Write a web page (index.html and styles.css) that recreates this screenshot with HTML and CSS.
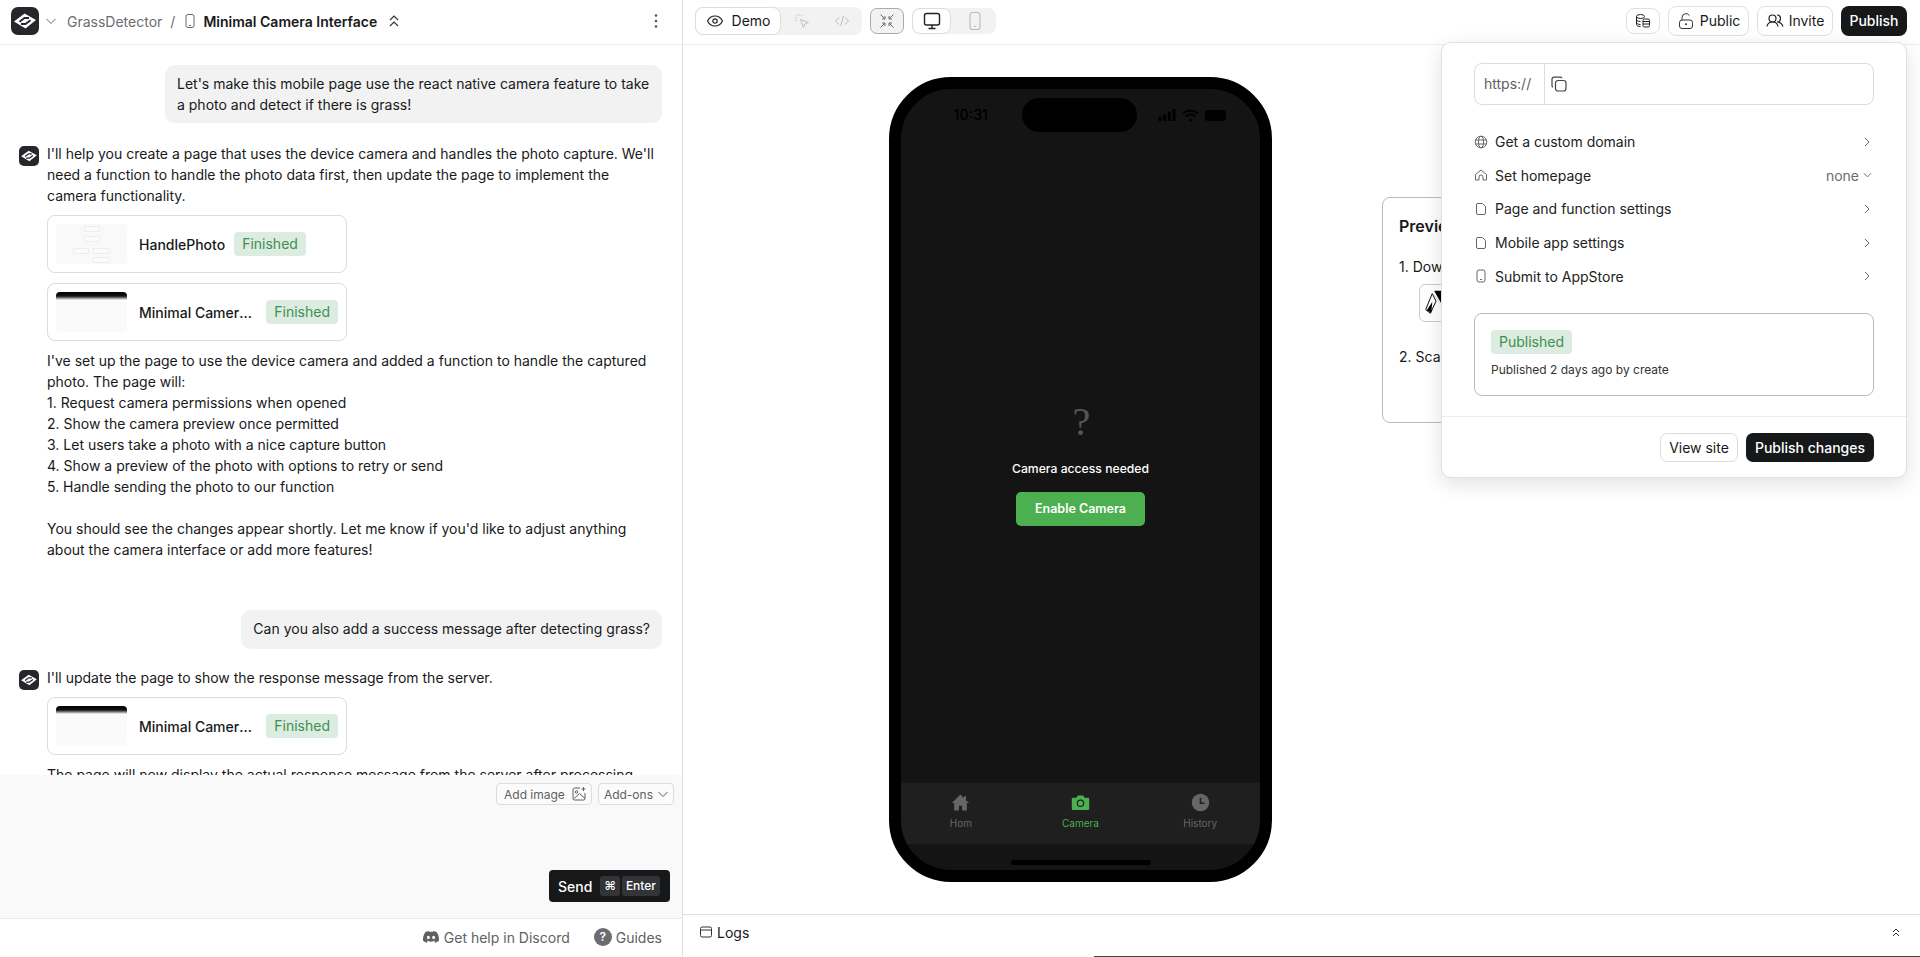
FILE: index.html
```html
<!DOCTYPE html>
<html lang="en">
<head>
<meta charset="utf-8">
<title>Minimal Camera Interface</title>
<link rel="stylesheet" href="styles.css">
</head>
<body>
<div class="app">
  <aside class="left">
    <header class="left-top">
      <svg class="logo" viewBox="0 0 28 28"><rect width="28" height="28" rx="7" fill="#26272b"/><path d="M3 14.500 13.500 6.500 25 13 14.500 21.500Z" fill="#fff"/><path d="M8.500 14.800 13.500 11H18M19.500 13.200 14.500 17H10" fill="none" stroke="#26272b" stroke-width="1.800"/></svg>
      <svg class="ic12 muted" viewBox="0 0 12 12"><path d="M1.500 4 6 8.500 10.500 4" fill="none" stroke="currentColor"/></svg>
      <span class="crumb">GrassDetector</span>
      <span class="crumb slash">/</span>
      <svg class="ic16 muted" viewBox="0 0 16 16"><rect x="4" y="1.500" width="8" height="13" rx="2" fill="none" stroke="currentColor"/><path d="M7 12.500h2" stroke="currentColor"/></svg>
      <span class="crumb-title">Minimal Camera Interface</span>
      <svg class="ic14" viewBox="0 0 14 14"><path d="M3 6 7 2l4 4M3 12l4-4 4 4" fill="none" stroke="#333" stroke-width="1.200"/></svg>
      <svg class="kebab" viewBox="0 0 4 16"><circle cx="2" cy="2.500" r="1.300"/><circle cx="2" cy="8" r="1.300"/><circle cx="2" cy="13.500" r="1.300"/></svg>
    </header>

    <div class="chat">
      <div class="user-msg first">Let's make this mobile page use the react native camera feature to take a photo and detect if there is grass!</div>

      <div class="bot-msg">
        <svg class="logo-sm" viewBox="0 0 28 28"><rect width="28" height="28" rx="7" fill="#26272b"/><path d="M3 14.500 13.500 6.500 25 13 14.500 21.500Z" fill="#fff"/><path d="M8.500 14.800 13.500 11H18M19.500 13.200 14.500 17H10" fill="none" stroke="#26272b" stroke-width="1.800"/></svg>
        <div class="bot-body">
          <p class="para">I'll help you create a page that uses the device camera and handles the photo capture. We'll need a function to handle the photo data first, then update the page to implement the camera functionality.</p>
          <div class="card">
            <div class="thumb thumb-fn"><i></i><i></i><i></i><i></i><i></i></div>
            <span class="card-name fit">HandlePhoto</span>
            <span class="badge">Finished</span>
          </div>
          <div class="card">
            <div class="thumb thumb-page"></div>
            <span class="card-name">Minimal Camera Interface</span>
            <span class="badge">Finished</span>
          </div>
          <p class="para after">I've set up the page to use the device camera and added a function to handle the captured photo. The page will:<br>1. Request camera permissions when opened<br>2. Show the camera preview once permitted<br>3. Let users take a photo with a nice capture button<br>4. Show a preview of the photo with options to retry or send<br>5. Handle sending the photo to our function<br><br>You should see the changes appear shortly. Let me know if you'd like to adjust anything about the camera interface or add more features!</p>
        </div>
      </div>

      <div class="user-msg second">Can you also add a success message after detecting grass?</div>

      <div class="bot-msg third">
        <svg class="logo-sm" viewBox="0 0 28 28"><rect width="28" height="28" rx="7" fill="#26272b"/><path d="M3 14.500 13.500 6.500 25 13 14.500 21.500Z" fill="#fff"/><path d="M8.500 14.800 13.500 11H18M19.500 13.200 14.500 17H10" fill="none" stroke="#26272b" stroke-width="1.800"/></svg>
        <div class="bot-body">
          <p class="para">I'll update the page to show the response message from the server.</p>
          <div class="card">
            <div class="thumb thumb-page"></div>
            <span class="card-name">Minimal Camera Interface</span>
            <span class="badge">Finished</span>
          </div>
          <p class="para after">The page will now display the actual response message from the server after processing</p>
        </div>
      </div>
    </div>

    <div class="composer">
      <div class="composer-tools">
        <button class="tool">Add image
          <svg class="ic16" viewBox="0 0 16 16" fill="none" stroke="currentColor"><path d="M9 2H3.500A1.500 1.500 0 0 0 2 3.500v9A1.500 1.500 0 0 0 3.500 14h9a1.500 1.500 0 0 0 1.500-1.500V7"/><circle cx="5.500" cy="6" r="1.200"/><path d="m2.500 13 6-5.500 5.500 5M12.500 1v4M10.500 3h4"/></svg>
        </button>
        <button class="tool tool-addons">Add-ons
          <svg class="ic12" viewBox="0 0 12 12"><path d="M1.500 4 6 8.500 10.500 4" fill="none" stroke="currentColor"/></svg>
        </button>
      </div>
      <div class="composer-send">
        <button class="send">Send <kbd class="key key-cmd">⌘</kbd><kbd class="key">Enter</kbd></button>
      </div>
    </div>

    <footer class="left-foot">
      <a class="foot-link">
        <svg class="ic18" viewBox="0 0 24 24"><path fill="#5f6064" d="M19.500 5.300A17 17 0 0 0 15.300 4l-.5 1.100a16 16 0 0 0-5.600 0L8.700 4a17 17 0 0 0-4.200 1.300C1.800 9.300 1.100 13.200 1.400 17a17 17 0 0 0 5.200 2.700l1.100-1.800-1.700-.8.400-.3a12 12 0 0 0 11.200 0l.4.300-1.700.8 1.100 1.800a17 17 0 0 0 5.200-2.700c.4-4.400-.7-8.300-3.100-11.700ZM8.500 14.700c-1 0-1.900-1-1.900-2.200s.8-2.200 1.900-2.200 1.900 1 1.900 2.200-.8 2.200-1.900 2.200Zm7 0c-1 0-1.900-1-1.900-2.200s.8-2.200 1.900-2.200 1.900 1 1.900 2.200-.8 2.200-1.900 2.200Z"/></svg>
        Get help in Discord
      </a>
      <a class="foot-link">
        <span class="help-dot">?</span>
        Guides
      </a>
    </footer>
  </aside>

  <main class="right">
    <header class="right-top">
      <div class="seg seg-mode">
        <button class="seg-on seg-demo">
          <svg class="ic18" viewBox="0 0 18 18" fill="none" stroke="#222" stroke-width="1.200"><path d="M1.500 9S4 4 9 4s7.500 5 7.500 5-2.500 5-7.500 5-7.500-5-7.500-5Z"/><circle cx="9" cy="9" r="2.200"/></svg>
          Demo
        </button>
        <svg class="ic16 seg-ic ic-a" viewBox="0 0 16 16" fill="none" stroke="#bdbdbd"><path d="m6.500 6.500 8 3-3.500 1.500-1.500 3.500Z"/><path d="M5 1v2M1 5h2M2 2l1.500 1.500M8 2 6.800 3.200M2 8l1.200-1.200" stroke-dasharray="1.500 1"/></svg>
        <svg class="ic16 seg-ic ic-b" viewBox="0 0 16 16" fill="none" stroke="#bdbdbd"><path d="M5 4.500 1.500 8 5 11.500M11 4.500 14.500 8 11 11.500M9.500 3l-3 10"/></svg>
      </div>
      <button class="collapse">
        <svg class="ic16" viewBox="0 0 16 16" fill="none" stroke="#666"><path d="M1.500 1.500l4 4M6 3v3H3M14.500 1.500l-4 4M10 3v3h3M1.500 14.500l4-4M6 13v-3H3M14.500 14.500l-4-4M10 13v-3h3"/></svg>
      </button>
      <div class="seg seg-device">
        <button class="seg-on seg-desk">
          <svg class="ic20" viewBox="0 0 20 20" fill="none" stroke="#222" stroke-width="1.400"><rect x="2.500" y="2.500" width="15" height="11.500" rx="2"/><path d="M10 14v3M6.500 17.500h7"/></svg>
        </button>
        <svg class="ic20 seg-phone" viewBox="0 0 20 20" fill="none" stroke="#bdbdbd" stroke-width="1.200"><rect x="5" y="1.500" width="10" height="17" rx="2.500"/><path d="M9 15.500h2"/></svg>
      </div>
      <div class="top-actions">
        <button class="act act-db">
          <svg class="ic16" viewBox="0 0 16 16" fill="none" stroke="#222"><ellipse cx="5.500" cy="3.500" rx="4" ry="2"/><path d="M1.500 3.500v8c0 1.100 1.800 2 4 2M1.500 6.500c0 1.100 1.800 2 4 2M1.500 9.500c0 1.100 1.800 2 4 2"/><rect x="8" y="6" width="6.500" height="8" rx="1.500"/><path d="M8 8.500h6.500M8 11h6.500"/></svg>
        </button>
        <button class="act act-public">
          <svg class="ic18" viewBox="0 0 18 18" fill="none" stroke="#333"><rect x="2.500" y="8" width="13" height="8.500" rx="2.500"/><path d="M5 8V5.500a4 4 0 0 1 7.500-1.800"/><circle cx="9" cy="12.200" r=".6" fill="#333"/></svg>
          Public
        </button>
        <button class="act act-invite">
          <svg class="ic18" viewBox="0 0 18 18" fill="none" stroke="#222" stroke-width="1.200"><circle cx="6.500" cy="6.500" r="3.500"/><path d="M1 14.500c.5-3 2.500-4.500 5.500-4.500s5 1.500 5.500 4.500"/><path d="M11 3a3.500 3.500 0 0 1 0 7c3 0 5 1.500 6 4.500"/></svg>
          Invite
        </button>
        <button class="publish">Publish</button>
      </div>
    </header>

    <div class="stage">
      <div class="phone">
        <div class="status">
          <span class="time">10:31</span>
          <span class="island"></span>
          <span class="status-ic">
            <svg class="sig" viewBox="0 0 20 14" fill="#000"><rect x="0" y="9" width="3.500" height="5" rx="1"/><rect x="5.500" y="6" width="3.500" height="8" rx="1"/><rect x="11" y="3" width="3.500" height="11" rx="1"/><rect x="16.500" y="0" width="3.500" height="14" rx="1"/></svg>
            <svg class="wifi" viewBox="0 0 18 14" fill="none" stroke="#000" stroke-width="2"><path d="M1 5a11.500 11.500 0 0 1 16 0M4 8a7 7 0 0 1 10 0"/><circle cx="9" cy="12" r="1.500" fill="#000" stroke="none"/></svg>
            <span class="batt"></span>
          </span>
        </div>
        <div class="screen">
          <div class="qmark">?</div>
          <div class="need">Camera access needed</div>
          <button class="enable">Enable Camera</button>
        </div>
        <nav class="tabs">
          <div class="tab">
            <svg class="tab-ic" viewBox="0 0 24 24" fill="#666"><path d="M12 2 1 12.500h3V22h6v-6h4v6h6v-9.500h3L19 9.600V4h-3v2.800Z"/></svg>
            <span>Hom</span>
          </div>
          <div class="tab tab-on">
            <svg class="tab-ic" viewBox="0 0 24 24"><path fill="#4caf50" d="M8.500 3h7l1.500 3h4.500A1.500 1.500 0 0 1 23 7.500V20a1.500 1.500 0 0 1-1.500 1.500h-19A1.500 1.500 0 0 1 1 20V7.500A1.500 1.500 0 0 1 2.500 6H7Z"/><circle cx="12" cy="13" r="4" fill="none" stroke="#1f1f1f" stroke-width="1.500"/></svg>
            <span>Camera</span>
          </div>
          <div class="tab">
            <svg class="tab-ic" viewBox="0 0 24 24"><circle cx="12" cy="12" r="11" fill="#666"/><path d="M12 6v7h5" fill="none" stroke="#1f1f1f" stroke-width="2"/></svg>
            <span>History</span>
          </div>
        </nav>
        <div class="home-zone"><span class="home-bar"></span></div>
      </div>

      <section class="preview">
        <h3 class="preview-title">Preview on your phone</h3>
        <p class="preview-step">1. Download Expo Go</p>
        <div class="store">
          <svg class="store-ic" viewBox="0 0 24 32"><path d="M8 4 22 26 12 10Z" fill="#000"/><path d="M10 3 23 3 23 26Z" fill="#000"/><path d="M8 6 1 23 6 27 12 14Z" fill="#fff" stroke="#000"/><path d="M2 24 8 15 7 26Z" fill="#000"/></svg>
        </div>
        <p class="preview-step step-two">2. Scan the QR code</p>
      </section>
    </div>

    <footer class="logs">
      <svg class="ic14" viewBox="0 0 14 14" fill="none" stroke="#333"><path d="M1.500 3.500A1.500 1.500 0 0 1 3 2h8a1.500 1.500 0 0 1 1.500 1.500v7A1.500 1.500 0 0 1 11 12H3a1.500 1.500 0 0 1-1.500-1.500ZM1.500 5h11"/></svg>
      <span class="logs-label">Logs</span>
      <svg class="ic12 logs-chev" viewBox="0 0 12 12" fill="none" stroke="#333"><path d="M3 6l3-3 3 3M3 10l3-3 3 3"/></svg>
    </footer>
    <div class="bottom-line"></div>

    <div class="pop">
      <div class="pop-main">
        <div class="url">
          <span class="url-scheme">https://</span>
          <span class="url-value">
            <svg class="ic18" viewBox="0 0 18 18" fill="none" stroke="#444" stroke-width="1.200"><rect x="5.500" y="5.500" width="10.500" height="10.500" rx="2.500"/><path d="M12 3.200A1.800 1.800 0 0 0 10.500 2.200H4A2 2 0 0 0 2 4.200v6.500c0 .7.400 1.200 1 1.500"/></svg>
          </span>
        </div>
        <ul class="menu">
          <li class="menu-row">
            <svg class="ic14" viewBox="0 0 14 14" fill="none" stroke="#666"><circle cx="7" cy="7" r="5.800"/><ellipse cx="7" cy="7" rx="2.600" ry="5.800"/><path d="M1.500 5h11M1.500 9h11"/></svg>
            <span class="menu-text">Get a custom domain</span>
            <svg class="ic12 chev" viewBox="0 0 12 12" fill="none" stroke="#666"><path d="m4 2 4 4-4 4"/></svg>
          </li>
          <li class="menu-row">
            <svg class="ic14" viewBox="0 0 14 14" fill="none" stroke="#666"><path d="M1.500 12V6.500L7 2l5.500 4.500V12H9V9a2 2 0 0 0-4 0v3Z"/></svg>
            <span class="menu-text">Set homepage</span>
            <span class="none">none</span>
            <svg class="ic12 chev-down" viewBox="0 0 12 12" fill="none" stroke="#666"><path d="m2 4 4 4 4-4"/></svg>
          </li>
          <li class="menu-row">
            <svg class="ic14" viewBox="0 0 14 14" fill="none" stroke="#666"><path d="M3 1.500h5.500l3 3V11a1.500 1.500 0 0 1-1.500 1.500H4A1.500 1.500 0 0 1 2.500 11V2Z"/></svg>
            <span class="menu-text">Page and function settings</span>
            <svg class="ic12 chev" viewBox="0 0 12 12" fill="none" stroke="#666"><path d="m4 2 4 4-4 4"/></svg>
          </li>
          <li class="menu-row">
            <svg class="ic14" viewBox="0 0 14 14" fill="none" stroke="#666"><path d="M3 1.500h5.500l3 3V11a1.500 1.500 0 0 1-1.500 1.500H4A1.500 1.500 0 0 1 2.500 11V2Z"/></svg>
            <span class="menu-text">Mobile app settings</span>
            <svg class="ic12 chev" viewBox="0 0 12 12" fill="none" stroke="#666"><path d="m4 2 4 4-4 4"/></svg>
          </li>
          <li class="menu-row">
            <svg class="ic14" viewBox="0 0 14 14" fill="none" stroke="#666"><rect x="3" y="1" width="8" height="12" rx="2"/><path d="M6 10.500h2"/></svg>
            <span class="menu-text">Submit to AppStore</span>
            <svg class="ic12 chev" viewBox="0 0 12 12" fill="none" stroke="#666"><path d="m4 2 4 4-4 4"/></svg>
          </li>
        </ul>
        <div class="state">
          <span class="badge badge-pub">Published</span>
          <span class="state-text">Published 2 days ago by create</span>
        </div>
      </div>
      <div class="pop-foot">
        <button class="view-site">View site</button>
        <button class="pub-changes">Publish changes</button>
      </div>
    </div>
  </main>
</div>
</body>
</html>
```

FILE: styles.css
```css
* { box-sizing: border-box; }
html, body { margin: 0; height: 100%; }
body {
  font-family: Inter, "Liberation Sans", sans-serif;
  color: #18191b;
  background: #fff;
  font-size: 14px;
  overflow: hidden;
}
button { font: inherit; color: inherit; background: none; border: 0; padding: 0; }
p, h3, ul { margin: 0; padding: 0; }
svg { display: block; flex: none; }
.ic12 { width: 12px; height: 12px; }
.ic14 { width: 14px; height: 14px; }
.ic16 { width: 16px; height: 16px; }
.ic18 { width: 18px; height: 18px; }
.ic20 { width: 20px; height: 20px; }
.muted { color: #666; }

.app { display: flex; width: 1920px; height: 957px; }

/* left */
.left {
  width: 683px;
  flex: none;
  display: flex;
  flex-direction: column;
  border-right: 1px solid #e0e0e0;
}
.left-top {
  height: 45px;
  flex: none;
  display: flex;
  align-items: center;
  padding: 0 12px 2px 11px;
  border-bottom: 1px solid #ececec;
}
.logo { width: 28px; height: 28px; margin-right: 6px; }
.crumb { color: #6b6c70; margin-left: 10px; font-size: 14px; }
.slash { margin: 0 7px 0 8px; }
.crumb-title { font-weight: 600; font-size: 14px; margin: 0 10px 0 5px; }
.kebab { width: 4px; height: 16px; margin-left: auto; fill: #555; margin-right: 12px; }

.chat {
  flex: 1;
  min-height: 0;
  overflow: hidden;
  padding: 20px 20px 0 19px;
  display: flex;
  flex-direction: column;
}
.user-msg {
  align-self: flex-end;
  background: #f2f2f2;
  border-radius: 10px;
  line-height: 21px;
  padding: 8px 12px;
  flex: none;
}
.user-msg.first { width: 497px; padding: 8px 11px 8px 12px; height: 58px; }
.user-msg.second { margin-top: 50px; padding: 8px 12px; height: 39px; }
.bot-msg { display: flex; gap: 8px; margin-top: 20px; flex: none; }
.bot-msg.third { margin-top: 18px; }
.logo-sm { width: 20px; height: 20px; margin-top: 3px; }
.bot-body { flex: 1; min-width: 0; }
.para { line-height: 21px; }
.para.after { margin-top: 9px; }
.card {
  width: 300px;
  height: 58px;
  margin-top: 10px;
  border: 1px solid #dcdcdc;
  border-radius: 8px;
  display: flex;
  align-items: center;
  padding: 0 8px;
}
.para + .card { margin-top: 9px; }
.thumb { width: 71px; height: 40px; border-radius: 4px; flex: none; background: #f9f9f9; position: relative; margin-right: 12px; }
.thumb-page { background: linear-gradient(#000 0, #111 4px, #fafafa 8px); }
.thumb-fn i { position: absolute; border: 1px solid #eee; background: #fbfbfb; }
.thumb-fn i:nth-child(1) { left: 28px; top: 2px; width: 16px; height: 6px; }
.thumb-fn i:nth-child(2) { left: 28px; top: 12px; width: 16px; height: 6px; }
.thumb-fn i:nth-child(3) { left: 17px; top: 24px; width: 16px; height: 6px; }
.thumb-fn i:nth-child(4) { left: 37px; top: 24px; width: 16px; height: 6px; }
.thumb-fn i:nth-child(5) { left: 37px; top: 33px; width: 16px; height: 6px; }
.card-name { flex: 1; min-width: 0; white-space: nowrap; overflow: hidden; text-overflow: ellipsis; font-weight: 500; font-size: 14px; }
.card-name.fit { flex: none; }
.badge {
  flex: none;
  background: #dcece0;
  color: #3f8f52;
  height: 24px;
  line-height: 24px;
  padding: 0 8px;
  border-radius: 4px;
  font-size: 14px;
  margin-left: 12px;
}
.card-name.fit + .badge { margin-left: 9px; }

.composer {
  height: 144px;
  flex: none;
  background: #f9f9f9;
  padding: 8px 8px 16px;
  display: flex;
  flex-direction: column;
  justify-content: space-between;
  border-bottom: 1px solid #ececec;
}
.composer-tools { display: flex; justify-content: flex-end; gap: 6px; }
.tool {
  height: 22px;
  padding: 0 4px 0 7px;
  border: 1px solid #dcdcdc;
  border-radius: 4px;
  background: #fbfbfb;
  color: #5f6064;
  font-size: 12px;
  display: flex;
  align-items: center;
  gap: 6px;
}
.tool-addons { padding: 0 4px 0 5px; gap: 4px; }
.composer-send { display: flex; justify-content: flex-end; padding-right: 4px; }
.send {
  height: 32px;
  width: 121px;
  background: #17181a;
  color: #fff;
  border-radius: 4px;
  display: flex;
  align-items: center;
  font-weight: 500;
  padding: 0 10px 0 9px;
  font-size: 14px;
}
.key {
  font-family: inherit;
  font-size: 12px;
  font-weight: 500;
  background: #333437;
  border-radius: 3px;
  height: 20px;
  line-height: 20px;
  padding: 0 4px;
  margin-left: 2px;
}
.key-cmd { margin-left: 8px; width: 20px; text-align: center; padding: 0; }

.left-foot {
  height: 38px;
  flex: none;
  display: flex;
  justify-content: flex-end;
  align-items: center;
  gap: 24px;
  padding: 0 20px 2px 0;
  color: #5f6064;
}
.foot-link { display: flex; align-items: center; gap: 4px; font-size: 14px; }
.help-dot {
  width: 18px;
  height: 18px;
  border-radius: 50%;
  background: #6b6c70;
  color: #fff;
  font-size: 12px;
  font-weight: 600;
  line-height: 18px;
  text-align: center;
}

/* right */
.right { flex: 1; min-width: 0; display: flex; flex-direction: column; position: relative; }
.right-top {
  height: 45px;
  flex: none;
  display: flex;
  align-items: center;
  padding: 0 13px 2px 12px;
  border-bottom: 1px solid #ececec;
}
.seg { display: flex; align-items: center; background: #f2f2f2; border-radius: 8px; }
.seg-mode { width: 167px; height: 28px; }
.seg-on { background: #fff; border: 1px solid #dcdcdc; border-radius: 8px; display: flex; align-items: center; justify-content: center; }
.seg-demo { width: 86px; height: 28px; gap: 8px; font-size: 14px; padding-bottom: 1px; }
.seg-ic.ic-a { margin-left: 13px; }
.seg-ic.ic-b { margin-left: 24px; }
.collapse {
  width: 34px;
  height: 26px;
  margin-left: 8px;
  background: #f2f2f2;
  border: 1px solid #aaa;
  border-radius: 7px;
  display: flex;
  align-items: center;
  justify-content: center;
}
.seg-device { width: 84px; height: 26px; margin-left: 8px; }
.seg-desk { width: 39px; height: 26px; }
.seg-phone { margin-left: 14px; }
.top-actions { margin-left: auto; display: flex; align-items: center; gap: 8px; }
.act {
  height: 30px;
  border: 1px solid #e0e0e0;
  border-radius: 8px;
  display: flex;
  align-items: center;
  justify-content: center;
  gap: 5px;
  font-size: 14px;
  padding-bottom: 1px;
}
.act-db { width: 34px; height: 26px; }
.act-public { width: 81px; }
.act-invite { width: 76px; }
.publish {
  width: 66px;
  height: 30px;
  background: #17181a;
  color: #fff;
  font-weight: 500;
  border-radius: 8px;
  font-size: 14px;
  padding-bottom: 2px;
}

.stage {
  flex: 1;
  min-height: 0;
  display: flex;
  align-items: flex-start;
  padding: 32px 0 0 206px;
  gap: 110px;
  overflow: hidden;
}
.phone {
  width: 383px;
  height: 805px;
  flex: none;
  border: 12px solid #000;
  border-radius: 62px;
  background: #141414;
  display: flex;
  flex-direction: column;
  overflow: hidden;
}
.status {
  height: 43px;
  flex: none;
  padding-top: 9px;
  display: grid;
  grid-template-columns: 121px 115px 1fr;
}
.time { font-size: 14px; font-weight: 600; color: #000; text-align: right; padding-right: 34px; line-height: 34px; }
.island { background: #000; height: 34px; border-radius: 17px; }
.status-ic { display: flex; align-items: center; gap: 6px; padding-left: 21px; }
.sig { width: 18px; height: 12px; }
.wifi { width: 17px; height: 13px; }
.batt { width: 21px; height: 11px; background: #000; border-radius: 3px; }
.screen {
  flex: 1;
  min-height: 0;
  display: flex;
  flex-direction: column;
  align-items: center;
  justify-content: center;
  padding-top: 9px;
}
.qmark {
  font-family: "Liberation Serif", serif;
  font-size: 40px;
  line-height: 46px;
  color: #555;
  padding-left: 2px;
}
.need { font-size: 12.200px; font-weight: 500; color: #fff; margin-top: 14px; line-height: 20px; }
.enable {
  width: 129px;
  height: 34px;
  margin-top: 13px;
  background: #4caf50;
  color: #fff;
  border-radius: 5px;
  font-size: 12.500px;
  font-weight: 600;
}
.tabs {
  height: 61px;
  flex: none;
  background: #1f1f1f;
  display: flex;
  justify-content: space-around;
  align-items: center;
  padding: 0 0 5px;
}
.tab { width: 120px; display: flex; flex-direction: column; align-items: center; gap: 4px; color: #666; font-size: 10px; line-height: 14px; font-weight: 400; }
.tab-on { color: #4caf50; }
.tab-ic { width: 19px; height: 19px; }
.home-zone { height: 26px; flex: none; display: flex; justify-content: center; padding-top: 16px; }
.home-bar { width: 140px; height: 5px; border-radius: 3px; background: #000; }

.preview {
  width: 320px;
  height: 226px;
  flex: none;
  margin-top: 120px;
  border: 1px solid #bbb;
  border-radius: 8px;
  padding: 17px 16px;
}
.preview-title { font-size: 16px; font-weight: 600; line-height: 22px; }
.preview-step { margin-top: 19px; line-height: 21px; }
.step-two { margin-top: 24px; }
.store {
  width: 120px;
  height: 38px;
  margin: 7px 0 0 20px;
  border: 1px solid #ccc;
  border-radius: 6px;
  padding: 3px 4px;
}
.store-ic { width: 24px; height: 30px; }

.logs {
  height: 43px;
  flex: none;
  border-top: 1px solid #e0e0e0;
  display: flex;
  align-items: center;
  padding: 0 18px 8px 16px;
  gap: 4px;
}
.logs-label { font-size: 14px; }
.logs-chev { margin-left: auto; }
.bottom-line { position: absolute; right: 0; bottom: 0; width: 826px; height: 1px; background: #444; }

.pop {
  position: absolute;
  top: 42px;
  right: 13px;
  width: 466px;
  height: 436px;
  background: #fff;
  border: 1px solid #e0e0e0;
  border-radius: 10px;
  box-shadow: 0 6px 20px rgba(0, 0, 0, .12);
  display: flex;
  flex-direction: column;
}
.pop-main { flex: 1; padding: 20px 32px 0; }
.url { height: 42px; border: 1px solid #dcdcdc; border-radius: 8px; display: flex; }
.url-scheme { width: 70px; flex: none; border-right: 1px solid #dcdcdc; display: flex; align-items: center; padding: 0 0 2px 9px; color: #5f6064; }
.url-value { display: flex; align-items: center; padding: 0 0 1px 5px; }
.menu { list-style: none; margin-top: 20px; }
.menu-row { height: 33.600px; display: flex; align-items: center; gap: 7px; padding-right: 1px; }
.menu-text { flex: 1; font-size: 14px; color: #222; }
.none { color: #6b6c70; }
.chev-down { margin-left: -4px; width: 11px; }
.state {
  height: 83px;
  margin-top: 20px;
  border: 1px solid #bbb;
  border-radius: 8px;
  padding: 16px;
  display: flex;
  flex-direction: column;
  align-items: flex-start;
}
.badge-pub { margin-left: 0; width: 81px; text-align: center; padding: 0; }
.state-text { font-size: 12px; line-height: 16px; margin-top: 8px; color: #333; }
.pop-foot {
  height: 61px;
  flex: none;
  border-top: 1px solid #ececec;
  display: flex;
  justify-content: flex-end;
  gap: 8px;
  padding: 16px 32px 0 0;
}
.view-site { width: 78px; height: 29px; border: 1px solid #dcdcdc; border-radius: 7px; }
.pub-changes { width: 128px; height: 29px; background: #17181a; color: #fff; border-radius: 7px; font-weight: 500; }
```
